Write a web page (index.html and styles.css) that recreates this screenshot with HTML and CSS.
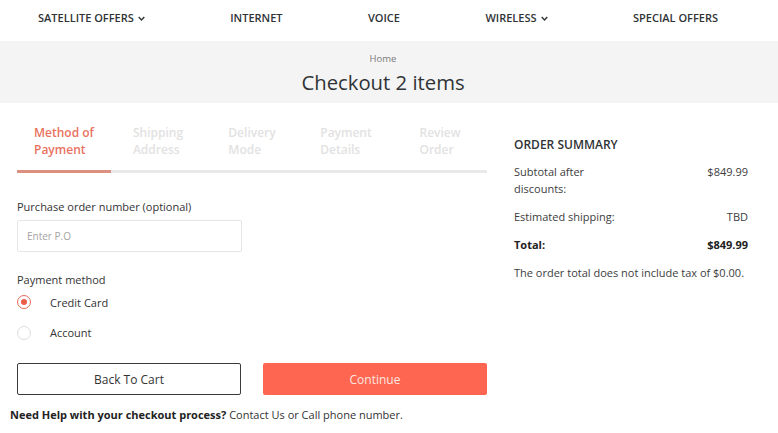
FILE: index.html
```html
<!DOCTYPE html>
<html lang="en">
<head>
<meta charset="utf-8">
<title>Checkout</title>
<link rel="stylesheet" href="styles.css">
</head>
<body>
<nav class="topnav">
  <a class="nav-item">SATELLITE OFFERS <svg class="chev" viewBox="0 0 10 6" width="7" height="5"><path d="M1 1l4 4 4-4" fill="none" stroke="currentColor" stroke-width="2"/></svg></a>
  <a class="nav-item">INTERNET</a>
  <a class="nav-item">VOICE</a>
  <a class="nav-item">WIRELESS <svg class="chev" viewBox="0 0 10 6" width="7" height="5"><path d="M1 1l4 4 4-4" fill="none" stroke="currentColor" stroke-width="2"/></svg></a>
  <a class="nav-item">SPECIAL OFFERS</a>
</nav>
<header class="band">
  <div class="crumb">Home</div>
  <h1 class="title">Checkout 2 items</h1>
</header>
<main class="main">
  <section class="left">
    <div class="steps">
      <div class="step active"><span>Method of<br>Payment</span></div>
      <div class="step"><span>Shipping<br>Address</span></div>
      <div class="step"><span>Delivery<br>Mode</span></div>
      <div class="step"><span>Payment<br>Details</span></div>
      <div class="step"><span>Review<br>Order</span></div>
    </div>
    <label class="field-label">Purchase order number (optional)</label>
    <div class="input"><span class="placeholder">Enter P.O</span></div>
    <div class="field-label pm">Payment method</div>
    <div class="radio-row"><span class="radio checked"></span><span>Credit Card</span></div>
    <div class="radio-row"><span class="radio"></span><span>Account</span></div>
    <div class="buttons">
      <button class="btn btn-outline">Back To Cart</button>
      <button class="btn btn-primary">Continue</button>
    </div>
    <p class="help"><b>Need Help with your checkout process?</b> Contact Us or Call phone number.</p>
  </section>
  <aside class="summary">
    <h2 class="sum-title">ORDER SUMMARY</h2>
    <div class="sum-row"><span class="lbl">Subtotal after discounts:</span><span class="val">$849.99</span></div>
    <div class="sum-row"><span class="lbl">Estimated shipping:</span><span class="val">TBD</span></div>
    <div class="sum-row total"><span class="lbl">Total:</span><span class="val">$849.99</span></div>
    <p class="note">The order total does not include tax of $0.00.</p>
  </aside>
</main>
</body>
</html>
```
FILE: styles.css
```css
* { box-sizing: border-box; }
body {
  margin: 0;
  font-family: "Open Sans", "Liberation Sans", sans-serif;
  color: #3a3a3a;
  background: #fff;
  width: 778px;
  overflow: hidden;
}
.topnav {
  height: 41px;
  display: flex;
  align-items: center;
  justify-content: space-between;
  padding: 0 60px 0 38px;
}
.nav-item {
  font-size: 11px;
  font-weight: 600;
  color: #2f3336;
  display: flex;
  align-items: center;
  gap: 4px;
  padding-bottom: 6px;
}
.chev { display: block; margin-top: 1px; }
.band {
  background: #f4f4f4;
  height: 62px;
  text-align: center;
  padding: 11px 12px 0 0;
}
.crumb {
  font-size: 9.5px;
  color: #7a7a7a;
  line-height: 13px;
}
.title {
  margin: 3px 0 0;
  font-size: 20.3px;
  font-weight: 400;
  color: #2f3336;
  line-height: 28px;
}
.main {
  display: flex;
  gap: 27px;
  padding: 0 30px 0 17px;
}
.left {
  width: 470px;
  display: flex;
  flex-direction: column;
}
.steps {
  display: grid;
  grid-template-columns: repeat(5, 1fr);
  padding-top: 22px;
  border-bottom: 3px solid #e9e9e9;
}
.step {
  display: flex;
  justify-content: center;
  font-size: 12px;
  line-height: 16.5px;
  font-weight: 600;
  color: #e2e2e2;
  padding-bottom: 12px;
  margin-bottom: -3px;
  border-bottom: 3px solid transparent;
}
.step span { text-align: left; }
.step.active {
  color: #e9725f;
  border-bottom-color: #dc9080;
}
.field-label {
  font-size: 11px;
  line-height: 15px;
  color: #333;
  margin-top: 26px;
}
.field-label.pm { margin-top: 20px; }
.input {
  margin-top: 6px;
  width: 225px;
  height: 32px;
  border: 1px solid #e6e6e6;
  border-radius: 2px;
  display: flex;
  align-items: center;
  padding-left: 9px;
}
.placeholder {
  font-size: 10px;
  color: #a4a4a4;
}
.radio-row {
  height: 30px;
  display: flex;
  align-items: center;
  gap: 19px;
  font-size: 11px;
  color: #333;
}
.radio-row + .radio-row { height: 31px; }
.radio {
  width: 14px;
  height: 14px;
  border-radius: 50%;
  border: 1px solid #dedede;
  display: flex;
  align-items: center;
  justify-content: center;
}
.radio.checked { border: 1.5px solid #e6695a; }
.radio.checked::after {
  content: "";
  width: 6px;
  height: 6px;
  border-radius: 50%;
  background: #ec5a48;
}
.buttons {
  margin-top: 15px;
  display: flex;
  justify-content: space-between;
}
.btn {
  height: 32px;
  font-family: inherit;
  font-size: 12px;
  border-radius: 2px;
  cursor: pointer;
  padding-top: 2px;
}
.btn-outline {
  background: #fff;
  border: 1.5px solid #3b3b3b;
  color: #333;
  width: 224px;
}
.btn-primary {
  background: #fe6651;
  border: none;
  color: #fde6e0;
  width: 224px;
}
.help {
  margin: 12px 0 0 -7px;
  font-size: 11px;
  line-height: 15px;
  color: #333;
}
.help b { font-weight: 700; color: #222; }
.summary {
  width: 234px;
  padding-top: 34px;
}
.sum-title {
  margin: 0 0 10px;
  font-size: 12px;
  line-height: 16px;
  font-weight: 600;
  color: #2f3336;
}
.sum-row {
  display: grid;
  grid-template-columns: 1fr 1fr;
  font-size: 11px;
  line-height: 17px;
  color: #3d3d3d;
  margin-bottom: 11px;
}
.sum-row .val { text-align: right; }
.sum-row.total { font-weight: 700; color: #222; }
.note {
  margin: 0;
  font-size: 11px;
  line-height: 17px;
  color: #3d3d3d;
}
```
